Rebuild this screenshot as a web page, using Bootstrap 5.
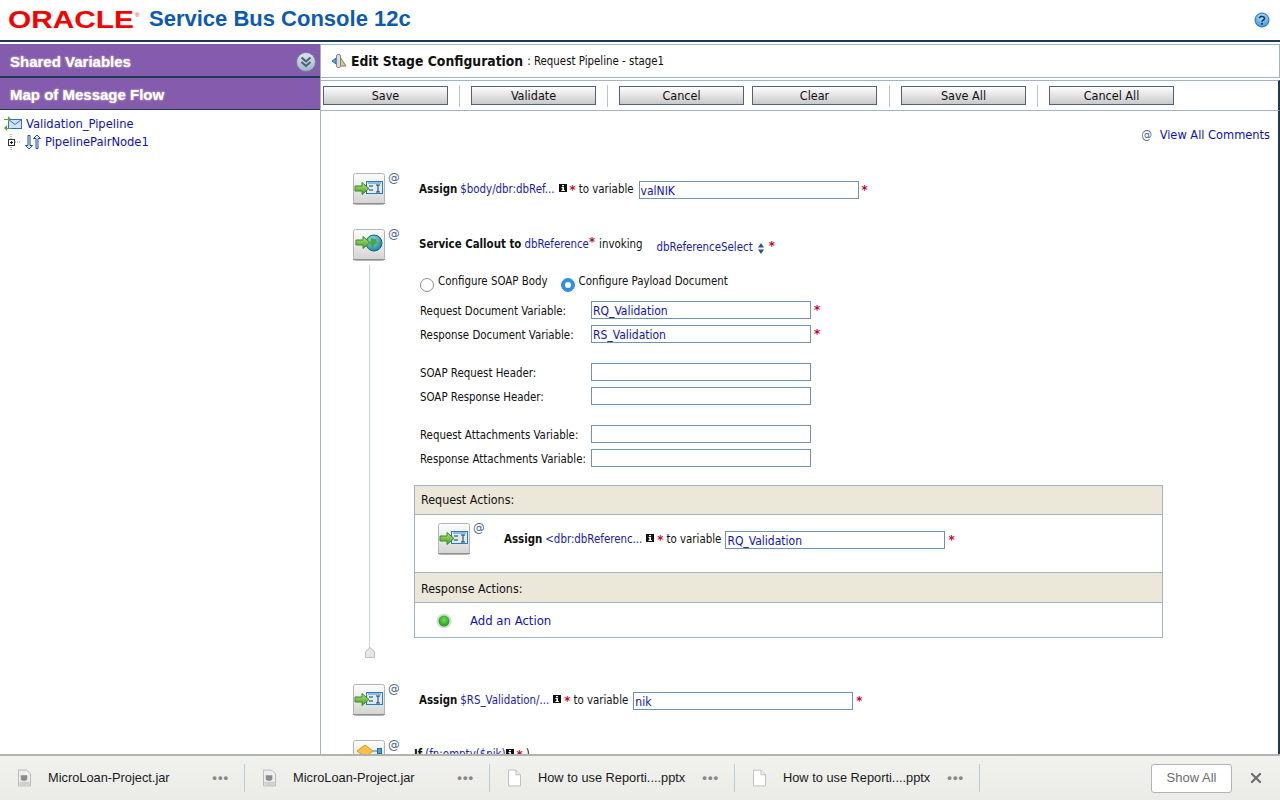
<!DOCTYPE html>
<html lang="en"><head><meta charset="utf-8"><title>Service Bus Console 12c</title>
<link href="https://cdn.jsdelivr.net/npm/bootstrap@5.3.0/dist/css/bootstrap.min.css" rel="stylesheet">
<style>
html,body{height:100%;overflow:hidden}
body{font-family:"DejaVu Sans Condensed","DejaVu Sans",sans-serif;font-stretch:condensed;font-size:11.4px;color:#111;background:#fff;line-height:1.2}
.defs-hold{position:absolute;width:0;height:0}
.shell{height:800px;display:flex;flex-direction:column}
.hdr{height:42px;flex:none;border-bottom:2px solid #1f3a55;padding:0 10px 0 8px}
.hdr-title{font-family:"Liberation Sans",sans-serif;font-weight:700;font-size:22px;color:#0b5bb5;margin-left:8px;line-height:1;margin-top:-3px}
.work{flex:1;min-height:0;display:flex;padding-top:2px}
.side{width:321px;flex:none;border-right:1px solid #a4b3c4;height:100%}
.pbar{background:#855cad;color:#fff;font-family:"Liberation Sans",sans-serif;font-weight:700;font-size:15px;padding-left:10px;text-shadow:0 0 2px #e8def2}
.pbar-a{height:34px;border-bottom:2px solid #1f3a55;padding-top:4px}
.pbar-b{height:32px;border-bottom:1px solid #1f3a55;padding-top:2px}
.tree{padding:5px 0 0 4px;font-size:12.8px;color:#1010c0}
.tree-row{height:18px}
.mainp{flex:1;min-width:0;height:100%;display:flex;flex-direction:column}
.ttl{height:34px;flex:none;border:1px solid #a4b3c4;border-left:0;padding-left:10px}
.ttl b{font-size:13.8px;margin-left:4px;margin-right:4px}
.ttl span{padding-top:2px}
.tbar{height:31px;flex:none;margin-top:2px;border-top:1px solid #a4b3c4;border-bottom:1px solid #a4b3c4;border-right:2px solid #1f3a55;padding-left:2px}
.tb-btn{width:125px;height:19px;padding:0;border-radius:0;font-size:12.5px;line-height:17px;color:#111;border:1px solid #4d6478;background:linear-gradient(#fdfdfd,#c9c9c9)}
.tb-sep{width:1px;height:22px;background:#b9c4cf;margin:0 11px}
.tb-wide{margin-left:12px}
.tb-gap{width:8px}
.cont{flex:1;min-height:0;overflow:hidden;padding-left:32px;border-right:2px solid #1f3a55;position:relative}
.vac{height:49px;padding:16px 8px 0 0;text-align:right;font-size:12.7px;color:#1010c0;margin-bottom:13px}
.vac i{font-style:normal;color:#4e6390;margin-right:4px;font-size:12px}
.stp{display:flex;align-items:flex-start;height:32px}
.stp-gap{margin-bottom:24px}
.atg{width:34px;padding:0 0 0 3px;color:#4e6390;font-size:13px;margin-top:-3px;flex:none;line-height:16px}
.stxt{display:flex;align-items:center;height:18px;margin-top:8px;white-space:nowrap}
.stxt b{font-weight:700;margin-right:3px}
.stxt>b,.stxt>.lift{padding-bottom:1px}
.stxt.up>b,.stxt.up>.lift{padding-bottom:3px}
.ifrow{margin:6px 0 0 -5px}
.lnk{color:#1a1ab8}
.req{color:#c8002a;font-weight:700;font-size:13px;line-height:8px;height:9px;margin:0 3px}
.finp{width:220px;height:18px;min-height:18px;flex:none;padding:1px 1px 0;border-radius:0;border:1px solid #6f92b5;font-size:12px;line-height:16px;color:#1010c0;box-shadow:none;font-family:inherit;font-stretch:condensed}
.gap5{margin-left:5px}
.sel-gap{margin-left:14px}
.cbody{margin-left:16px;margin-top:4px;border-left:1px solid #c6d0e4;padding:6px 0 10px 50px;height:383px}
.rrow{height:24px;margin-bottom:3px}
.rrow .form-check-input{width:14px;height:14px;margin:3px 4px 0 0;flex:none;border-color:#8d8d8d}
.rrow .form-check-input:checked{background-color:#2f8fe8;border-color:#2f8fe8}
.rtxt{margin-right:13px;margin-top:-3px}
.frow{display:flex;align-items:center;height:24px}
.frow label{width:171px;flex:none;margin:0;white-space:nowrap;padding-top:4px}
.fgap{margin-top:14px}
.apanel{margin:15px 0 0 -6px;width:749px;border:1px solid #a4b3c4;font-size:12.4px}
.aph{height:29px;background:#ebe7d9;padding:3px 0 0 6px;display:flex;align-items:center}
.aph-first{height:28px;padding-top:0}
.apb1{height:59px;border-top:1px solid #a4b3c4;border-bottom:1px solid #a4b3c4;padding:8px 0 0 23px;font-size:11.4px}
.apb2{height:35px;border-top:1px solid #a4b3c4;padding:1px 0 0 21px;font-size:13px;color:#1010c0}
.addtxt{margin-left:18px}
.endmark{display:block;margin:-1px 0 26px 12px}
.dbar{height:46px;flex:none;position:relative;background:linear-gradient(#f1f1ee,#ebebe7);border-top:2px solid #b3b3b0;font-family:"Liberation Sans",sans-serif;font-size:12.8px;color:#1b1b1b}
.ditem{width:245px;height:28px;border-right:1px solid #b5cfdc;padding-left:18px;flex:none}
.dname{margin-left:17px;flex:1}
.ddots{color:#888;font-weight:700;letter-spacing:1px;margin-right:15px;font-size:13px;line-height:8px}
.showall{width:81px;height:29px;padding:0;background:#fff;border:1px solid #b4b4b4;border-radius:3px;color:#6d6d6d;font-size:13px;font-weight:500}
.xbtn{margin:0 19px 0 19px}
</style></head>
<body>
<svg class="defs-hold" aria-hidden="true"><defs>
<linearGradient id="tile" x1="0" y1="0" x2="0" y2="1"><stop offset="0" stop-color="#fdfdfd"/><stop offset="1" stop-color="#d3d3d0"/></linearGradient>
<linearGradient id="garr" x1="0" y1="0" x2="0" y2="1"><stop offset="0" stop-color="#b4e27a"/><stop offset="1" stop-color="#4c9e2c"/></linearGradient>
<radialGradient id="glb" cx=".4" cy=".35" r=".7"><stop offset="0" stop-color="#a8e4f0"/><stop offset="1" stop-color="#157a9c"/></radialGradient>
<radialGradient id="gdot" cx=".5" cy=".4" r=".6"><stop offset="0" stop-color="#6fdc55"/><stop offset="1" stop-color="#1f9a1f"/></radialGradient>
<symbol id="ic-assign" viewBox="0 0 32 32"><rect x=".5" y=".5" width="31" height="31" rx="2" fill="url(#tile)" stroke="#b4b4b4"/><path d="M0 30.500h32" stroke="#8f8f8f"/><rect x="13.500" y="8.500" width="16" height="12" fill="#d8ecfb" stroke="#2a7bc0"/><path d="M15 9.500h13v1H15z" fill="#3d8fd0"/><path d="M16 13h4M16 17h4M23 12h4M25 12v7M23 19h4" stroke="#333" fill="none"/><path d="M2 13h7V9.500l7 6-7 6V18H2z" fill="url(#garr)" stroke="#3e8a24"/></symbol>
<symbol id="ic-callout" viewBox="0 0 32 32"><rect x=".5" y=".5" width="31" height="31" rx="2" fill="url(#tile)" stroke="#b4b4b4"/><path d="M0 30.500h32" stroke="#8f8f8f"/><circle cx="21" cy="14" r="8" fill="url(#glb)" stroke="#106a88"/><path d="M18 9l5 1 1 4-3 2-1 4-3-5zM26 12l1 4-2 2z" fill="#45a845"/><path d="M3 11h7V7.500l7 6-7 6V16H3z" fill="url(#garr)" stroke="#3e8a24"/></symbol>
<symbol id="ic-if" viewBox="0 0 32 32"><rect x=".5" y=".5" width="31" height="31" rx="2" fill="url(#tile)" stroke="#b4b4b4"/><path d="M4 11l8-6 8 6-8 6z" fill="#f2c14a" stroke="#d69a23"/><path d="M20 11h5" stroke="#2a7bc0"/><rect x="24.500" y="8.500" width="4" height="5" fill="#4aa0dc" stroke="#1f6fb0"/></symbol>
<symbol id="ic-info" viewBox="0 0 8 8"><rect width="8" height="8" fill="#111"/><path d="M3 1h2v1.300H3zM2.500 3H5v3h.8v1H2.400V6h.9V4h-.8z" fill="#fff"/></symbol>
<symbol id="ic-jar" viewBox="0 0 14 18"><path d="M.5.500h9l4 4v13H.5z" fill="#eee" stroke="#b5b5b5"/><path d="M3 6h7v3.500c0 2-1.500 2.500-3.500 2.500S3 11.500 3 9.500z" fill="#8b8b8b"/><rect x="1.500" y="13" width="11" height="3.500" fill="#cfcfcf"/></symbol>
<symbol id="ic-doc" viewBox="0 0 14 18"><path d="M.5.500h8l5 5v12H.5z" fill="#fff" stroke="#bbb"/><path d="M8.500.500v5h5" fill="#eee" stroke="#bbb"/></symbol>
</defs></svg>
<div class="shell">
 <header class="hdr d-flex align-items-center">
  <svg width="133" height="30" viewBox="0 0 133 30" aria-label="Oracle"><text x="0" y="23" textLength="126" lengthAdjust="spacingAndGlyphs" font-family="Liberation Sans" font-size="23" font-weight="700" fill="#f80000">ORACLE</text><text x="127" y="12" font-family="Liberation Sans" font-size="6" fill="#f80000">®</text></svg>
  <div class="hdr-title">Service Bus Console 12c</div>
  <svg class="ms-auto" width="16" height="16" viewBox="0 0 16 16"><defs><radialGradient id="hq" cx=".5" cy=".3" r=".8"><stop offset="0" stop-color="#b8e0fa"/><stop offset="1" stop-color="#2d86d6"/></radialGradient></defs><circle cx="8" cy="8" r="7" fill="url(#hq)" stroke="#2a74b8"/><path d="M5.500 6.200C5.500 3.800 10.500 3.800 10.500 6.400 10.500 8 8 8 8 9.800" fill="none" stroke="#123a70" stroke-width="1.600"/><rect x="7.100" y="10.800" width="1.800" height="1.800" fill="#123a70"/></svg>
 </header>
 <div class="work">
  <aside class="side">
   <div class="pbar pbar-a d-flex align-items-center justify-content-between">Shared Variables
    <svg class="me-1" width="20" height="20" viewBox="0 0 20 20"><defs><linearGradient id="chev" x1="0" y1="0" x2="0" y2="1"><stop offset="0" stop-color="#dfe6ee"/><stop offset="1" stop-color="#9fb3c8"/></linearGradient></defs><circle cx="10" cy="10" r="9.500" fill="url(#chev)" stroke="#6c7f95"/><path d="M5.500 5.500L10 9.500l4.500-4M5.500 10L10 14l4.500-4" fill="none" stroke="#4a5f78" stroke-width="2"/></svg>
   </div>
   <div class="pbar pbar-b d-flex align-items-center">Map of Message Flow</div>
   <div class="tree">
    <div class="tree-row d-flex align-items-center gap-1">
     <svg width="18" height="16" viewBox="0 0 18 16"><rect x="4.500" y="3.500" width="13" height="9" fill="#cfe2fa" stroke="#3a6fb5"/><path d="M4.500 3.500l6.500 5 6.500-5" fill="none" stroke="#3a6fb5"/><path d="M0 3h4V0l3 3-3 3V4H0zM7 12H3V9l-3 3 3 3v-2h4z" fill="#5ba33a"/></svg>
     <span>Validation_Pipeline</span>
    </div>
    <div class="tree-row d-flex align-items-center">
     <svg width="41" height="16" viewBox="0 0 41 16"><path d="M7 0v5M7 11v5M11 8h6" stroke="#888" stroke-dasharray="1 1"/><rect x="4.500" y="5.500" width="6" height="6" fill="#fff" stroke="#333"/><path d="M6 8.500h3M7.500 7v3" stroke="#111"/><path d="M24 1.500h2v10h2.500L25 15l-3.500-3.500H24z" fill="#e8f0fb" stroke="#1f4fa8"/><path d="M32 14.500h2v-10h2.500L33 1l-3.500 3.500H32z" fill="#e8f0fb" stroke="#1f4fa8"/></svg>
     <span>PipelinePairNode1</span>
    </div>
   </div>
  </aside>
  <main class="mainp">
   <div class="ttl d-flex align-items-center">
    <svg width="16" height="16" viewBox="0 0 16 16"><path d="M9 4l6 9H9z" fill="#e4c58b" stroke="#8d7a4f"/><path d="M1 8l4-3v6z" fill="#4fb3d9" stroke="#24708f"/><rect x="5.500" y="1.500" width="4" height="13" rx="1.500" fill="#d9dde2" stroke="#7e8790"/></svg>
    <b>Edit Stage Configuration</b><span>: Request Pipeline - stage1</span>
   </div>
   <div class="tbar d-flex align-items-center">
    <button class="btn tb-btn" type="button">Save</button><span class="tb-sep"></span>
    <button class="btn tb-btn" type="button">Validate</button><span class="tb-sep"></span>
    <button class="btn tb-btn" type="button">Cancel</button><span class="tb-gap"></span>
    <button class="btn tb-btn" type="button">Clear</button><span class="tb-sep tb-wide"></span>
    <button class="btn tb-btn" type="button">Save All</button><span class="tb-sep"></span>
    <button class="btn tb-btn" type="button">Cancel All</button>
   </div>
   <div class="cont">
    <div class="vac"><i>@</i> View All Comments</div>

    <div class="stp stp-gap">
     <svg width="32" height="32"><use href="#ic-assign"/></svg><div class="atg">@</div>
     <div class="stxt"><b>Assign</b><span class="lnk lift">$body/dbr:dbRef...</span><svg class="ms-1 mb-1" width="8" height="8"><use href="#ic-info"/></svg><span class="req">*</span><span class="lift">to variable</span><input class="form-control finp gap5" value="valNIK"><span class="req">*</span></div>
    </div>

    <div class="stp">
     <svg width="32" height="32"><use href="#ic-callout"/></svg><div class="atg">@</div>
     <div class="stxt up"><b>Service Callout to</b><span class="lnk lift">dbReference</span><span class="req mx-0 mb-2">*</span><span class="ms-1 lift">invoking</span><span class="lnk sel-gap mt-1">dbReferenceSelect</span>
      <svg class="ms-1 mt-1" width="8" height="11" viewBox="0 0 8 11"><path d="M4 0l3 4.500H1zM4 11L1 6.500h6z" fill="#2a4fa0"/></svg><span class="req ms-1">*</span></div>
    </div>
    <div class="cbody">
     <div class="rrow d-flex align-items-center">
      <input class="form-check-input" type="radio" name="cfg" aria-label="Configure SOAP Body"><span class="rtxt">Configure SOAP Body</span>
      <input class="form-check-input" type="radio" name="cfg" checked aria-label="Configure Payload Document"><span class="rtxt">Configure Payload Document</span>
     </div>
     <div class="frow"><label>Request Document Variable:</label><input class="form-control finp" value="RQ_Validation"><span class="req">*</span></div>
     <div class="frow"><label>Response Document Variable:</label><input class="form-control finp" value="RS_Validation"><span class="req">*</span></div>
     <div class="frow fgap"><label>SOAP Request Header:</label><input class="form-control finp" aria-label="SOAP Request Header"></div>
     <div class="frow"><label>SOAP Response Header:</label><input class="form-control finp" aria-label="SOAP Response Header"></div>
     <div class="frow fgap"><label>Request Attachments Variable:</label><input class="form-control finp" aria-label="Request Attachments Variable"></div>
     <div class="frow"><label>Response Attachments Variable:</label><input class="form-control finp" aria-label="Response Attachments Variable"></div>
     <div class="apanel">
      <div class="aph aph-first">Request Actions:</div>
      <div class="apb1 stp">
       <svg width="32" height="32"><use href="#ic-assign"/></svg><div class="atg">@</div>
       <div class="stxt"><b>Assign</b><span class="lnk lift">&lt;dbr:dbReferenc...</span><svg class="ms-1 mb-1" width="8" height="8"><use href="#ic-info"/></svg><span class="req">*</span><span class="lift">to variable</span><input class="form-control finp ms-1" value="RQ_Validation"><span class="req">*</span></div>
      </div>
      <div class="aph">Response Actions:</div>
      <div class="apb2 d-flex align-items-center">
       <svg width="16" height="16" viewBox="0 0 16 16"><circle cx="8" cy="8" r="7.500" fill="#ddd"/><circle cx="8" cy="8" r="5.500" fill="url(#gdot)"/></svg>
       <span class="addtxt">Add an Action</span>
      </div>
     </div>
    </div>
    <svg class="endmark" width="10" height="11" viewBox="0 0 10 11"><path d="M.5 10.500v-6l4.500-4 4.500 4v6z" fill="#e6e6e6" stroke="#bdbdbd"/></svg>

    <div class="stp stp-gap">
     <svg width="32" height="32"><use href="#ic-assign"/></svg><div class="atg">@</div>
     <div class="stxt"><b>Assign</b><span class="lnk lift">$RS_Validation/...</span><svg class="ms-1 mb-1" width="8" height="8"><use href="#ic-info"/></svg><span class="req">*</span><span class="lift">to variable</span><input class="form-control finp gap5" value="nik"><span class="req">*</span></div>
    </div>

    <div class="stp">
     <svg width="32" height="32"><use href="#ic-if"/></svg><div class="atg">@</div>
     <div class="stxt ifrow"><b>If</b><span class="lnk lift">(fn:empty($nik)</span><svg class="mb-1" width="8" height="8"><use href="#ic-info"/></svg><span class="req">*</span><span class="lift">)</span></div>
    </div>
   </div>
  </main>
 </div>
 <footer class="dbar d-flex align-items-center">
  <div class="ditem d-flex align-items-center"><svg width="13" height="18"><use href="#ic-jar"/></svg><span class="dname">MicroLoan-Project.jar</span><span class="ddots">•••</span></div>
  <div class="ditem d-flex align-items-center"><svg width="13" height="18"><use href="#ic-jar"/></svg><span class="dname">MicroLoan-Project.jar</span><span class="ddots">•••</span></div>
  <div class="ditem d-flex align-items-center"><svg width="13" height="18"><use href="#ic-doc"/></svg><span class="dname">How to use Reporti....pptx</span><span class="ddots">•••</span></div>
  <div class="ditem d-flex align-items-center"><svg width="13" height="18"><use href="#ic-doc"/></svg><span class="dname">How to use Reporti....pptx</span><span class="ddots">•••</span></div>
  <button class="btn showall ms-auto" type="button">Show All</button>
  <svg class="xbtn" width="10" height="10" viewBox="0 0 10 10" role="img" aria-label="Close"><path d="M0 0l10 10M10 0L0 10" stroke="#6b6b6b" stroke-width="2"/></svg>
 </footer>
</div>
<script src="https://cdn.jsdelivr.net/npm/bootstrap@5.3.0/dist/js/bootstrap.bundle.min.js"></script>
</body></html>
